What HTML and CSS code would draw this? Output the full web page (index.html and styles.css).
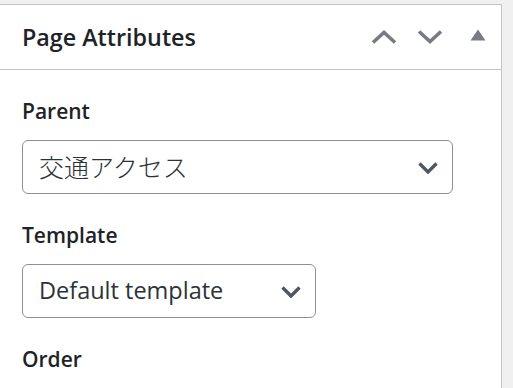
FILE: index.html
```html
<!DOCTYPE html>
<html lang="en">
<head>
    <meta charset="UTF-8">
    <meta name="viewport" content="width=device-width, initial-scale=1.0">
    <title>Page Attributes</title>
    <link rel="stylesheet" href="styles.css">
</head>
<body>
    <div class="postbox">
        <div class="postbox-header">
            <h2 class="hndle">Page Attributes</h2>
            <div class="handle-actions">
                <button class="handle-btn btn-up" aria-label="Move up">
                    <svg width="26" height="14" viewBox="0 0 26 14"><polyline points="2,12.5 13,2.5 24,12.5" fill="none" stroke="#787c82" stroke-width="3.6"/></svg>
                </button>
                <button class="handle-btn btn-down" aria-label="Move down">
                    <svg width="26" height="14" viewBox="0 0 26 14"><polyline points="2,1.5 13,11.5 24,1.5" fill="none" stroke="#787c82" stroke-width="3.6"/></svg>
                </button>
                <button class="handle-btn btn-toggle" aria-label="Toggle panel">
                    <svg width="16" height="12" viewBox="0 0 16 12"><polygon points="8,0.5 15.5,11.5 0.5,11.5" fill="#787c82"/></svg>
                </button>
            </div>
        </div>

        <div class="inside">
            <p class="attr-label">Parent</p>
            <div class="select select-wide">
                <span class="select-text select-text-cjk" lang="ja">交通アクセス</span>
                <svg class="select-arrow" width="20" height="12" viewBox="0 0 20 12"><polyline points="1.5,1.5 10,10 18.5,1.5" fill="none" stroke="#50575e" stroke-width="3.4"/></svg>
            </div>

            <p class="attr-label">Template</p>
            <div class="select select-narrow">
                <span class="select-text">Default template</span>
                <svg class="select-arrow" width="20" height="12" viewBox="0 0 20 12"><polyline points="1.5,1.5 10,10 18.5,1.5" fill="none" stroke="#50575e" stroke-width="3.4"/></svg>
            </div>

            <p class="attr-label">Order</p>
        </div>
    </div>
</body>
</html>
```

FILE: styles.css
```css
* {
    margin: 0;
    padding: 0;
    box-sizing: border-box;
}

body {
    font-family: 'Open Sans', 'Noto Sans CJK JP', sans-serif;
    background: #f0f0f1;
    color: #1d2327;
    height: 100vh;
    overflow: hidden;
}

.postbox {
    width: 503px;
    margin: 4px 0 0 -1px;
    background: #fff;
    border: 1px solid #c3c4c7;
    height: 400px;
}

.postbox-header {
    display: flex;
    align-items: center;
    height: 65px;
    border-bottom: 1px solid #c3c4c7;
    padding-left: 22px;
}

.hndle {
    flex: 1;
    font-size: 23.3px;
    font-weight: 600;
    line-height: 1.3;
    margin-top: 1px;
}

.handle-actions {
    display: flex;
    align-items: center;
    padding-right: 15px;
}

.handle-btn {
    background: none;
    border: none;
    display: flex;
    align-items: center;
    justify-content: center;
    cursor: pointer;
}

.btn-up {
    margin-right: 20px;
}

.btn-down {
    margin-right: 27px;
}

.btn-toggle {
    margin-top: -4px;
}

.inside {
    padding: 26px 22px 0 22px;
}

.attr-label {
    font-size: 21px;
    font-weight: 600;
    line-height: 30px;
    margin-bottom: 14px;
}

.select {
    display: flex;
    align-items: center;
    justify-content: space-between;
    height: 54px;
    border: 1px solid #8c8f94;
    border-radius: 6px;
    padding: 0 14px 0 16px;
    color: #2c3338;
    margin-bottom: 26px;
}

.select-wide {
    width: 431px;
}

.select-narrow {
    width: 294px;
}

.select-text {
    font-size: 23.5px;
    line-height: 1;
}

.select-text-cjk {
    font-size: 25px;
    font-weight: 300;
}

.select-arrow {
    margin-top: 2px;
}
```
